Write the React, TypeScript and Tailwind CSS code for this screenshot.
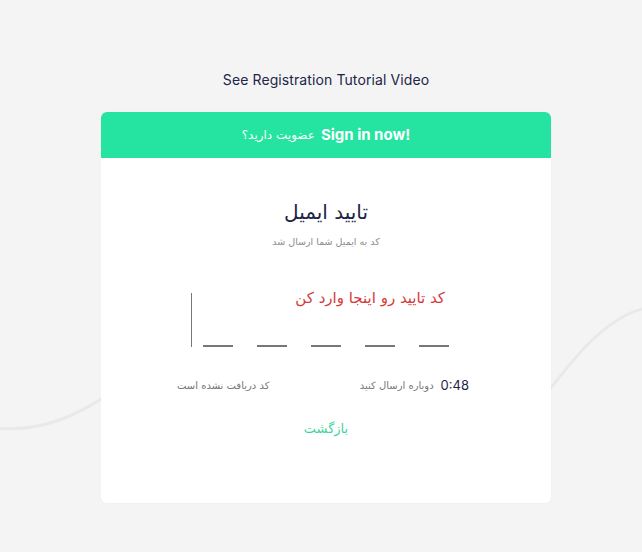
import React from 'react';

// Digits of the verification code (empty slots)
const SLOTS = [0, 1, 2, 3, 4];

function Wave() {
  return (
    <svg
      className="absolute inset-0 pointer-events-none"
      width="642"
      height="552"
      viewBox="0 0 642 552"
      fill="none"
    >
      <path
        d="M-4 428 C 40 433, 85 415, 130 378"
        stroke="#e9e9e9"
        strokeWidth="3"
        strokeLinecap="round"
      />
      <path
        d="M530 415 C 565 370, 600 318, 646 308"
        stroke="#e9e9e9"
        strokeWidth="3"
        strokeLinecap="round"
      />
    </svg>
  );
}

export default function App() {
  return (
    <div className="relative min-h-[552px] w-full overflow-hidden bg-[#f4f4f4] font-['Liberation_Sans',sans-serif]">
      <Wave />

      <div className="relative flex flex-col items-center pt-[70px] pl-[10px]">
        <a className="text-[14px] leading-[20px] text-[#1d2547] font-['Inter',sans-serif] tracking-[0.1px]">
          See Registration Tutorial Video
        </a>

        <div className="mt-[22px] w-[450px] rounded-md bg-white shadow-[0_0_2px_rgba(0,0,0,0.03)]">
          {/* header */}
          <div
            dir="rtl"
            className="flex h-[46px] items-center justify-center gap-[6px] rounded-t-md bg-[#25e3a0] text-white"
          >
            <span dir="ltr" className="text-[15px] font-bold font-['Inter',sans-serif]">Sign in now!</span>
            <span className="text-[12px] font-['DejaVu_Sans',sans-serif]">عضویت دارید؟</span>
          </div>

          {/* body */}
          <div dir="rtl" className="flex flex-col pt-[38px] pb-[64px] font-['DejaVu_Sans',sans-serif]">
            <h1 className="text-center text-[20px] leading-[32px] text-[#1d2547]">تایید ایمیل</h1>
            <p className="mt-[7px] text-center text-[9.5px] leading-[14px] text-[#8a8a8a]">
              کد به ایمیل شما ارسال شد
            </p>

            {/* code input */}
            <div dir="ltr" className="mt-[44px] mr-[100px] flex h-[54px] w-[260px] flex-col justify-between border-l border-[#777]">
              <div dir="rtl" className="pr-[6px] text-[15px] leading-[10px] text-[#d43b3b]">
                کد تایید رو اینجا وارد کن
              </div>
              <div className="flex gap-[24px] pl-[11px]">
                {SLOTS.map((i) => (
                  <div key={i} className="h-[2px] w-[30px] bg-[#777]" />
                ))}
              </div>
            </div>

            {/* resend row */}
            <div className="mt-[29px] mr-[82px] flex w-[292px] items-center justify-between">
              <div className="flex items-center gap-[7px]">
                <span className="text-[13px] text-[#1d2547] font-['Inter',sans-serif]">0:48</span>
                <span className="text-[10px] text-[#777]">دوباره ارسال کنید</span>
              </div>
              <span className="text-[10px] text-[#777]">کد دریافت نشده است</span>
            </div>

            <a className="mt-[23px] text-center text-[13px] leading-[20px] text-[#3fd69c]">بازگشت</a>
          </div>
        </div>
      </div>
    </div>
  );
}
